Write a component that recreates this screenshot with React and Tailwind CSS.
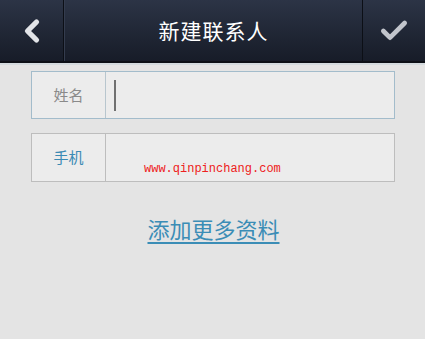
import { ChevronLeft, Check } from 'lucide-react'

const cjk = { fontFamily: '"Noto Sans CJK SC", "Noto Sans", sans-serif' }

export default function App() {
    return (
        <div className="w-[425px] h-[339px] bg-[#e4e4e4] overflow-hidden" style={cjk}>
            {/* Header */}
            <header className="h-[63px] flex bg-gradient-to-b from-[#2c3446] to-[#171c28] border-b-2 border-[#0d1017]">
                <button className="w-[64px] flex items-center justify-center border-r border-[#0c0f16]">
                    <ChevronLeft size={36} strokeWidth={3.5} className="text-[#e2e4e8]" />
                </button>
                <div className="flex-1 flex items-center justify-center border-l border-[#343c4e]">
                    <h1 className="text-[21px] text-white tracking-[1px]">新建联系人</h1>
                </div>
                <button className="w-[63px] flex items-center justify-center border-l border-[#0c0f16]">
                    <Check size={32} strokeWidth={3.5} className="text-[#c2c5cc]" />
                </button>
            </header>
            <div className="h-[2px] bg-[#d4dade]" />

            {/* Form */}
            <div className="pl-[31px] pr-[30px] pt-[6px] flex flex-col gap-[14px]">
                <div className="h-[48px] flex bg-[#ececec] border border-[#a3bccb]">
                    <div className="w-[74px] flex items-center justify-center border-r border-[#b8c6ce] text-[15px] text-[#8a8a8a]">
                        姓名
                    </div>
                    <div className="flex-1 flex items-center pl-[8px]">
                        <div className="w-[2px] h-[31px] bg-[#707070]" />
                    </div>
                </div>
                <div className="relative h-[49px] flex bg-[#ececec] border border-[#bdbdbd]">
                    <div className="w-[74px] flex items-center justify-center border-r border-[#bdbdbd] text-[15px] text-[#3a8ab4]">
                        手机
                    </div>
                    <div className="flex-1" />
                    <span
                        className="absolute left-[112px] top-[29px] text-[12px] leading-none text-[#ee2020]"
                        style={{ fontFamily: '"Liberation Mono", monospace' }}
                    >
                        www.qinpinchang.com
                    </span>
                </div>
            </div>

            <div className="flex justify-center pt-[33px] pl-[2px]">
                <a className="text-[22px] leading-[26px] text-[#3b8db6] underline underline-offset-[4px] decoration-[2px]">
                    添加更多资料
                </a>
            </div>
        </div>
    )
}
